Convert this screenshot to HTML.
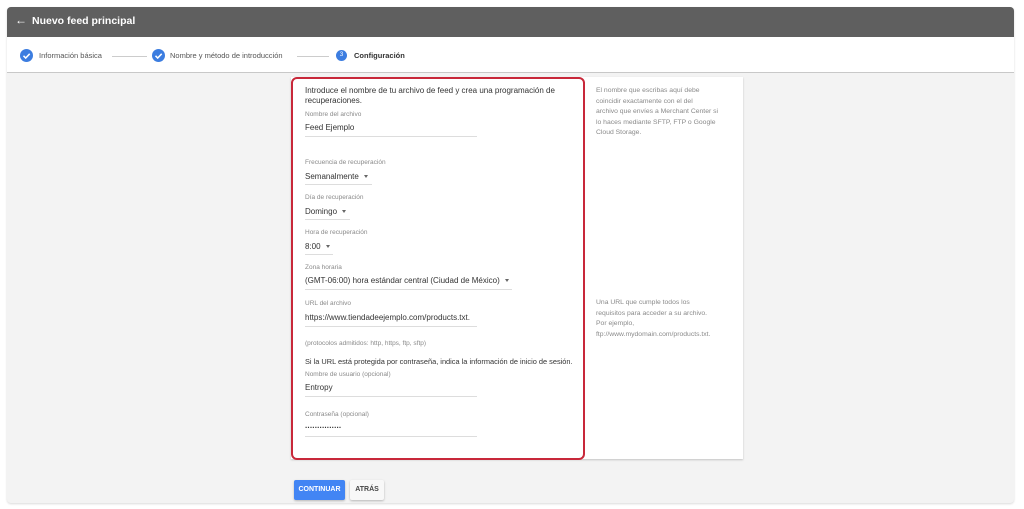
<!DOCTYPE html>
<html><head><meta charset="utf-8"><style>
*{margin:0;padding:0;box-sizing:border-box}
body{width:1024px;height:509px;background:#fff;font-family:"Liberation Sans",Arial,sans-serif;position:relative;overflow:hidden;color:#333}
.a{position:absolute;white-space:nowrap}
.panel{position:absolute;left:7px;top:7px;width:1007px;height:496px;background:#f3f3f3;border-radius:4px;overflow:hidden;box-shadow:0 1px 2px rgba(0,0,0,.15)}
.hdr{position:absolute;left:0;top:0;width:1007px;height:30px;background:#5f5f5f;color:#fff;font-weight:bold;font-size:10.5px;box-shadow:0 1px 3px rgba(0,0,0,.4)}
.step{position:absolute;left:0;top:30px;width:1007px;height:36px;background:#fff;border-bottom:1px solid #c8c8c8}
.chk{position:absolute;width:13px;height:13px;border-radius:50%;background:#3c7de0}
.ln{position:absolute;height:1px;background:#ccc}
.card{position:absolute;left:291px;top:77px;width:452px;height:382px;background:#fff;box-shadow:0 1px 2px rgba(0,0,0,.2)}
.red{position:absolute;left:291px;top:77px;width:294px;height:383px;border:2px solid #c8283a;border-radius:6px}
.lb{font-size:6.5px;color:#8a8a8a}
.v{font-size:8px;color:#333}
.ul{position:absolute;height:1px;background:#ddd}
.hint{font-size:6.8px;color:#8a8a8a;line-height:10.6px}
.dd{display:inline-block;margin-left:5px;border-left:2.5px solid transparent;border-right:2.5px solid transparent;border-top:3px solid #666;vertical-align:middle}
</style></head><body>
<div class="panel">
 <div class="hdr"><span class="a" style="left:8px;top:6px;font-size:12px;font-weight:normal">&#8592;</span><span class="a" style="left:25px;top:8px">Nuevo feed principal</span></div>
 <div class="step">
  <div class="chk" style="left:13px;top:12px"><svg width="13" height="13"><path d="M3.5 6.8l2.2 2.2 4-4.2" stroke="#fff" stroke-width="1.5" fill="none"/></svg></div>
  <span class="a" style="left:32px;top:14px;font-size:7.5px;color:#555">Información básica</span>
  <div class="ln" style="left:105px;top:19px;width:35px"></div>
  <div class="chk" style="left:145px;top:12px"><svg width="13" height="13"><path d="M3.5 6.8l2.2 2.2 4-4.2" stroke="#fff" stroke-width="1.5" fill="none"/></svg></div>
  <span class="a" style="left:163px;top:14px;font-size:7.5px;color:#555">Nombre y método de introducción</span>
  <div class="ln" style="left:290px;top:19px;width:32px"></div>
  <div class="chk" style="left:329px;top:13px;width:11px;height:11px;color:#fff;font-size:6px;text-align:center;line-height:11px">3</div>
  <span class="a" style="left:347px;top:14px;font-size:7.5px;color:#333;font-weight:bold">Configuración</span>
 </div>
</div>
<div class="card"></div>
<div class="red"></div>
<span class="a v" style="left:305px;top:86px">Introduce el nombre de tu archivo de feed y crea una programación de</span>
<span class="a v" style="left:305px;top:96px">recuperaciones.</span>
<span class="a lb" style="left:305px;top:111px">Nombre del archivo</span>
<span class="a v" style="left:305px;top:123px">Feed Ejemplo</span>
<div class="ul" style="left:305px;top:136px;width:172px"></div>
<span class="a lb" style="left:305px;top:159px">Frecuencia de recuperación</span>
<span class="a v" style="left:305px;top:172px">Semanalmente<i class="dd"></i></span>
<div class="ul" style="left:305px;top:184px;width:67px"></div>
<span class="a lb" style="left:305px;top:194px">Día de recuperación</span>
<span class="a v" style="left:305px;top:207px">Domingo<i class="dd"></i></span>
<div class="ul" style="left:305px;top:219px;width:45px"></div>
<span class="a lb" style="left:305px;top:229px">Hora de recuperación</span>
<span class="a v" style="left:305px;top:242px">8:00<i class="dd"></i></span>
<div class="ul" style="left:305px;top:254px;width:28px"></div>
<span class="a lb" style="left:305px;top:264px">Zona horaria</span>
<span class="a v" style="left:305px;top:276px">(GMT-06:00) hora estándar central (Ciudad de México)<i class="dd"></i></span>
<div class="ul" style="left:305px;top:289px;width:207px"></div>
<span class="a lb" style="left:305px;top:300px">URL del archivo</span>
<span class="a v" style="left:305px;top:313px">https://www.tiendadeejemplo.com/products.txt.</span>
<div class="ul" style="left:305px;top:326px;width:172px"></div>
<span class="a lb" style="left:305px;top:340px">(protocolos admitidos: http, https, ftp, sftp)</span>
<span class="a v" style="left:305px;top:357px;font-size:7.4px">Si la URL está protegida por contraseña, indica la información de inicio de sesión.</span>
<span class="a lb" style="left:305px;top:371px">Nombre de usuario (opcional)</span>
<span class="a v" style="left:305px;top:383px">Entropy</span>
<div class="ul" style="left:305px;top:396px;width:172px"></div>
<span class="a lb" style="left:305px;top:411px">Contraseña (opcional)</span>
<span class="a v" style="left:305px;top:421px;font-size:8px;letter-spacing:0.2px;font-weight:bold">...............</span>
<div class="ul" style="left:305px;top:436px;width:172px"></div>
<div class="a hint" style="left:596px;top:86px">El nombre que escribas aquí debe<br>coincidir exactamente con el del<br>archivo que envíes a Merchant Center si<br>lo haces mediante SFTP, FTP o Google<br>Cloud Storage.</div>
<div class="a hint" style="left:596px;top:298px">Una URL que cumple todos los<br>requisitos para acceder a su archivo.<br>Por ejemplo,<br>ftp://www.mydomain.com/products.txt.</div>
<div class="a" style="left:294px;top:480px;width:51px;height:20px;background:#4285f4;color:#fff;font-size:7px;font-weight:bold;text-align:center;line-height:20px;border-radius:2px;box-shadow:0 1px 2px rgba(0,0,0,.25)">CONTINUAR</div>
<div class="a" style="left:350px;top:480px;width:34px;height:20px;background:#f8f8f8;color:#444;font-size:7px;font-weight:bold;text-align:center;line-height:20px;border-radius:2px;box-shadow:0 1px 2px rgba(0,0,0,.25)">ATRÁS</div>
</body></html>
